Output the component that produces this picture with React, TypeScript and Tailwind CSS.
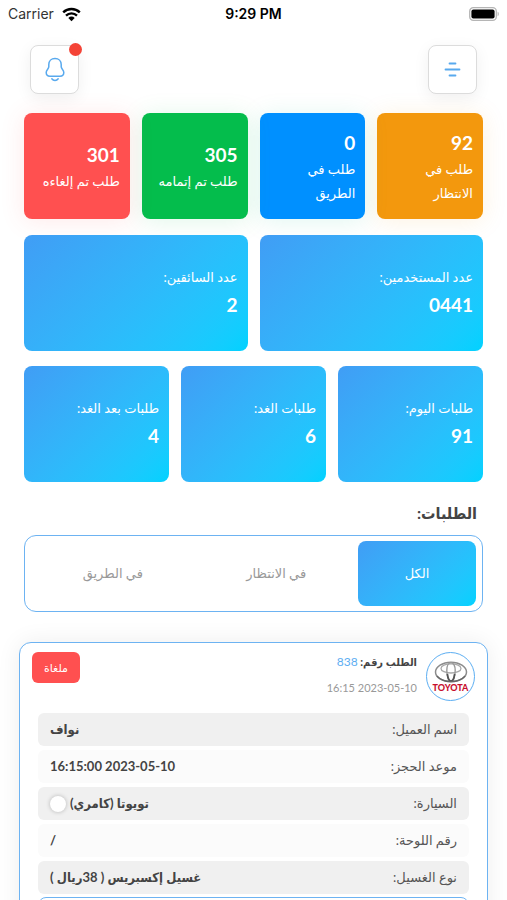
import type { ReactNode } from "react";

const gradient = "bg-linear-135 from-[#409df5] to-[#00d2ff]";
const boldText = "font-['Lato','DejaVu_Sans_Condensed','DejaVu_Sans',sans-serif] font-bold";

const statusCards = [
  { value: "92", label: "طلب في الانتظار", tone: "bg-[#f3980d] shadow-[0_2px_24px_#f3980d20]" },
  { value: "0", label: "طلب في الطريق", tone: "bg-[#0090ff] shadow-[0_2px_24px_#00c09020]" },
  { value: "305", label: "طلب تم إتمامه", tone: "bg-[#04bd4c] shadow-[0_2px_24px_#04bd4c20]" },
  { value: "301", label: "طلب تم إلغاءه", tone: "bg-[#ff5050] shadow-[0_2px_24px_#ff505020]" },
];

const totals = [
  { label: "عدد المستخدمين:", value: "0441" },
  { label: "عدد السائقين:", value: "2" },
];

const days = [
  { label: "طلبات اليوم:", value: "91" },
  { label: "طلبات الغد:", value: "6" },
  { label: "طلبات بعد الغد:", value: "4" },
];

const details: { label: string; value: string; swatch?: boolean }[] = [
  { label: "اسم العميل:", value: "نواف" },
  { label: "موعد الحجز:", value: "2023-05-10 16:15:00" },
  { label: "السيارة:", value: "تويوتا (كامري)", swatch: true },
  { label: "رقم اللوحة:", value: "/" },
  { label: "نوع الغسيل:", value: "غسيل إكسبريس ( 38ريال )" },
];

function StatusBar() {
  return (
    <div dir="ltr" className="grid h-7 grid-cols-3 items-center px-2 font-['Inter','Liberation_Sans',sans-serif] text-black">
      <div className="flex items-center gap-2 text-sm text-[#333]">
        Carrier
        <svg width="19" height="15" viewBox="0 0 19 15" fill="none" stroke="#000" strokeWidth="2.4" aria-hidden="true">
          <path d="M1.2 5.3a12 12 0 0 1 16.6 0" />
          <path d="M4 8.6a8 8 0 0 1 11 0" />
          <path d="M9.5 14.2 6.3 10.9a4.6 4.6 0 0 1 6.4 0Z" fill="#000" stroke="none" />
        </svg>
      </div>
      <div className="text-center text-sm font-semibold">9:29 PM</div>
      <div className="flex justify-end">
        <svg width="30" height="14" viewBox="0 0 30 14" aria-hidden="true">
          <rect x="0.7" y="0.7" width="26.6" height="12.6" rx="3.6" fill="#fff" stroke="#b5b5b5" strokeWidth="1.3" />
          <rect x="2.4" y="2.4" width="23.2" height="9.2" rx="2" fill="#000" />
          <path d="M28.6 4.8c1.6.5 1.6 3.9 0 4.4Z" fill="#b5b5b5" />
        </svg>
      </div>
    </div>
  );
}

function IconButton({ label, children }: { label: string; children: ReactNode }) {
  return (
    <button
      aria-label={label}
      className="relative flex size-[49px] items-center justify-center rounded-lg border-[1.5px] border-[#dcdcdc] bg-white text-[#58a9ee] shadow-[0_4px_16px_#00000010]"
    >
      {children}
    </button>
  );
}

function TotalCard({ label, value }: { label: string; value: string }) {
  return (
    <div className={`flex h-[116px] flex-col justify-center rounded-lg px-[10px] pb-1 text-white ${gradient}`}>
      <div className="text-[13px] leading-7 whitespace-nowrap">{label}</div>
      <div className="text-[19px] leading-7 font-bold">{value}</div>
    </div>
  );
}

function ToyotaLogo() {
  return (
    <div className="flex size-[49px] shrink-0 flex-col items-center justify-center rounded-full border-[1.5px] border-[#5caef2] bg-white">
      <svg width="34" height="22" viewBox="0 0 34 22" fill="none" stroke="#8c8c8c" aria-hidden="true">
        <ellipse cx="17" cy="11" rx="15.5" ry="9.8" strokeWidth="1.5" />
        <ellipse cx="17" cy="7.4" rx="10" ry="4.6" strokeWidth="1.3" stroke="#a8a8a8" />
        <path d="M17 1.6c-2.600 0-4.200 3.400-4.200 7.600 0 5.600 1.800 11.200 4.200 11.200s4.200-5.600 4.200-11.200c0-4.200-1.600-7.600-4.200-7.600Z" strokeWidth="1.4" stroke="#9a9a9a" />
        <path d="M13.300 13c.6 4 2 7.200 3.700 7.200s3.100-3.200 3.700-7.200" stroke="#555" strokeWidth="1.800" />
        <path d="M3 15c3 3.600 8 5.600 14 5.600S28 18.600 31 15" stroke="#666" strokeWidth="1.200" />
      </svg>
      <div dir="ltr" className="text-[9px] leading-[10px] font-black text-[#c8102e]">
        TOYOTA
      </div>
    </div>
  );
}

export default function App() {
  return (
    <div dir="rtl" className="h-screen overflow-hidden bg-white font-['Lato','DejaVu_Sans',sans-serif] text-[#444]">
      <StatusBar />

      <header className="flex justify-between px-[30px] pt-[17px]">
        <IconButton label="القائمة">
          <svg width="17" height="17" viewBox="0 0 17 17" fill="none" stroke="currentColor" strokeWidth="1.8" strokeLinecap="round" aria-hidden="true">
            <path d="M5.5 2.5h6M1.5 8.500h14M5.500 14.500h6" />
          </svg>
        </IconButton>
        <IconButton label="الإشعارات">
          <svg width="20" height="25" viewBox="0 0 20 25" fill="none" stroke="currentColor" strokeWidth="1.500" strokeLinecap="round" aria-hidden="true">
            <path d="M10 1.500c-3.800 0-6.200 2.500-6.200 5.900v2.400c0 2.100-2.600 2.900-2.600 5.800 0 2.300 1.600 3.700 3.800 3.700h10c2.200 0 3.800-1.400 3.800-3.700 0-2.900-2.600-3.700-2.600-5.800V7.400c0-3.400-2.400-5.900-6.200-5.900Z" />
            <path d="M6.800 21.800c1.600 2.300 4.800 2.300 6.400 0" />
          </svg>
          <span className="absolute -top-[3px] -right-[4px] size-[13px] rounded-full bg-[#f44336]" />
        </IconButton>
      </header>

      <main className="px-6 pt-[19px]">
        <section className="grid grid-cols-4 gap-3">
          {statusCards.map((card) => (
            <div key={card.label} className={`flex h-[106px] flex-col justify-center rounded-lg px-[10px] pt-0.5 text-white ${card.tone}`}>
              <div className="text-[19px] leading-7 font-bold">{card.value}</div>
              <div className="text-[13px] leading-6">{card.label}</div>
            </div>
          ))}
        </section>
        <section className="mt-4 grid grid-cols-2 gap-3">
          {totals.map((t) => (
            <TotalCard key={t.label} {...t} />
          ))}
        </section>
        <section className="mt-[15px] grid grid-cols-3 gap-3">
          {days.map((t) => (
            <TotalCard key={t.label} {...t} />
          ))}
        </section>

        <h2 className={`mt-[15px] px-1.5 text-base leading-8 ${boldText}`}>الطلبات:</h2>

        <div role="tablist" className="mt-[6px] flex h-[77px] rounded-xl border-[1.5px] border-[#6db3f2] px-1.5 py-[5px] text-[13px] text-[#999]">
          <button role="tab" aria-selected="true" className={`w-[118px] rounded-lg text-white ${gradient}`}>
            الكل
          </button>
          <button role="tab" aria-selected="false" className="flex-1">
            في الانتظار
          </button>
          <button role="tab" aria-selected="false" className="flex-1">
            في الطريق
          </button>
        </div>
      </main>

      <article className="mx-[19px] mt-[30px] rounded-xl border-[1.5px] border-[#6db3f2] bg-white px-3 pt-[9px] pb-6 shadow-[0_0_24px_#00000012]">
        <div className="flex items-start gap-[9px]">
          <ToyotaLogo />
          <div className="flex-1">
            <div className={`text-[11px] leading-5 ${boldText}`}>
              الطلب رقم: <span className="text-xs font-normal text-[#5caef2]">838</span>
            </div>
            <div className="mt-1.5 text-[11px] leading-5 text-[#999]">2023-05-10 16:15</div>
          </div>
          <span className="rounded-md bg-[#ff5050] px-3 text-[11px] leading-[31px] text-white">ملغاة</span>
        </div>

        <dl className="mx-1.5 mt-3 flex flex-col gap-1">
          {details.map((row) => (
            <div key={row.label} className="flex h-[33px] items-center justify-between rounded-md px-3 text-[13px] odd:bg-[#f0f0f0] even:bg-[#fbfbfb]">
              <dt className="text-[#555]">{row.label}</dt>
              <dd className={`flex items-center gap-1 ${boldText}`}>
                {row.value}
                {row.swatch && <span className="size-4 rounded-full bg-white shadow-[0_0_4px_#00000040]" />}
              </dd>
            </div>
          ))}
        </dl>
        <div className="mx-1.5 mt-[3px] h-24 rounded-lg border-[1.5px] border-[#6db3f2]" />
      </article>
    </div>
  );
}
